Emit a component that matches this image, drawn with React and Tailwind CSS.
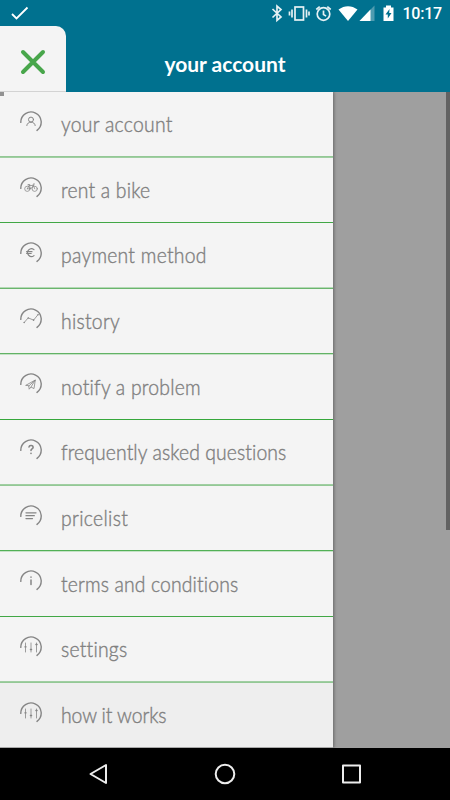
import clsx from 'clsx';

const STROKE = {
  fill: 'none',
  stroke: '#858585',
  strokeLinecap: 'round',
  strokeLinejoin: 'round',
};

const sliders = (
  <g {...STROKE} strokeWidth="0.8">
    <path d="M5.500 7v9M11 7v9M16.500 7v9" />
    <path d="M4.900 10.800h1.200M10.400 13.500h1.200M15.900 8.500h1.200" strokeWidth="1.300" />
  </g>
);

const MENU = [
  {
    label: 'your account',
    text: 'tracking-[0.3px]',
    row: 'h-[65px]',
    rule: 'border-[#93c895]',
    under: 'bg-[#a0cea2]',
    icon: (
      <g {...STROKE} strokeWidth="1">
        <circle cx="11" cy="8.600" r="2.500" />
        <path d="M6.800 14.500c.4-4.600 8-4.600 8.400 0" />
      </g>
    ),
  },
  {
    label: 'rent a bike',
    text: 'tracking-[0.22px]',
    row: 'h-[66px] pt-px',
    rule: 'border-[#41a745]',
    under: 'bg-[#f4f4f4]',
    icon: (
      <g {...STROKE} strokeWidth="0.75">
        <circle cx="7.300" cy="11.800" r="2.600" />
        <circle cx="14.700" cy="11.800" r="2.600" />
        <path d="M7.300 11.800 9 8.500h4.400l-2.600 3.300H7.300M8.800 7.600l2 4.200M14.700 11.800 13 7h1.600M8 7.600h1.800" />
      </g>
    ),
  },
  {
    label: 'payment method',
    text: 'tracking-[0.3px]',
    row: 'h-[65px]',
    rule: 'border-[#b5d9b6]',
    under: 'bg-[#6ab56d]',
    icon: (
      <g {...STROKE} strokeWidth="1.200">
        <path d="M14 7.600a3.900 3.900 0 1 0 0 6M6.600 9.700h5.400M6.600 11.500h4.600" />
      </g>
    ),
  },
  {
    label: 'history',
    text: 'tracking-[0.3px]',
    row: 'h-[66px] pt-px',
    rule: 'border-[#62b265]',
    under: 'bg-[#c5e2c6]',
    icon: (
      <g {...STROKE} strokeWidth="0.8">
        <path d="m4.200 14.500 4-4.600 5.400 2.200 4.400-5.400" />
        <path d="M4.200 14.500v.1M8.200 9.900v.1M13.600 12.100v.1M18 6.700v.1" strokeWidth="1.500" />
      </g>
    ),
  },
  {
    label: 'notify a problem',
    text: 'tracking-[0.25px] mt-px',
    row: 'h-[66px]',
    rule: 'border-[#36a73b]',
    under: 'bg-[#f4f4f4]',
    icon: (
      <g {...STROKE} strokeWidth="0.8">
        <path d="M6 12.200 15.300 7l-1.300 8.600-3-1.600-1.800 2.200-.4-3.200ZM8.800 13l6.500-6-4.300 7" />
      </g>
    ),
  },
  {
    label: 'frequently asked questions',
    text: 'tracking-[0.12px]',
    row: 'h-[65px]',
    rule: 'border-[#a0cea2]',
    under: 'bg-[#93c895]',
    icon: (
      <g {...STROKE} strokeWidth="1.600">
        <path d="M9 8c.3-2.200 4.200-2 4.100.4 0 1.500-2.100 1.400-2.100 3M11 14.300v.1" />
      </g>
    ),
  },
  {
    label: 'pricelist',
    text: 'tracking-[0.35px]',
    row: 'h-[66px] pt-px',
    rule: 'border-[#52b056]',
    under: 'bg-[#c5e2c6]',
    icon: (
      <g {...STROKE} strokeWidth="1.300">
        <path d="M6 7.800h10M6 10.700h8.300M6 13.600h6.500" />
      </g>
    ),
  },
  {
    label: 'terms and conditions',
    text: 'tracking-[0.16px] mt-px',
    row: 'h-[66px]',
    rule: 'border-[#41a745]',
    under: 'bg-[#f4f4f4]',
    icon: (
      <g {...STROKE} strokeWidth="1.500">
        <path d="M11 10v4.600M11 7.100v.1" />
      </g>
    ),
  },
  {
    label: 'settings',
    text: 'tracking-[0.25px]',
    row: 'h-[65px]',
    rule: 'border-[#a0cea2]',
    under: 'bg-[#93c895]',
    icon: sliders,
  },
  {
    label: 'how it works',
    text: 'tracking-[-0.1px]',
    row: 'h-[66px] pt-px',
    rule: 'border-[#a8a8a8]',
    icon: sliders,
    pressed: true,
  },
];

function MenuIcon({ children }) {
  return (
    <svg width="24" height="24" viewBox="-1 -1 24 24" className="shrink-0">
      <path
        d="M.8 11.400A10.200 10.200 0 1 1 17 19.400"
        {...STROKE}
        strokeWidth="1.400"
      />
      {children}
    </svg>
  );
}

function StatusBar() {
  return (
    <div className="flex h-[26px] items-center justify-between pl-[10px] pr-[8px] text-white">
      <svg width="20" height="16" viewBox="0 0 20 16">
        <path d="m2 9 4.500 4.500L17.500 2.500" fill="none" stroke="#fff" strokeWidth="1.800" />
      </svg>
      <div className="flex items-center">
        <svg width="130" height="20" viewBox="0 0 130 20">
          <g fill="none" stroke="#e6f1f4" strokeWidth="1.700">
            <path d="m2.500 6 8.500 8L7 17.500V3L11 6.500 2.500 14.500" />
            <rect x="25" y="4" width="8.500" height="13" />
            <path d="M22 6.500v8M36.500 6.500v8M19.500 8.500v4M39 8.500v4" />
            <circle cx="53.500" cy="11" r="6.300" />
            <path d="M53.500 7.500v4l2.600 1.600M46.300 6.500l3.400-2.900M57.300 3.600 60.700 6.500" />
          </g>
          <path d="M68.500 6.500c6-4.500 13-4.500 19 0L78 18Z" fill="#fff" />
          <path d="M104.500 2.500v15.500H89.500Z" fill="#4f9cb0" />
          <path d="M100.500 6.500v11.500H89.500Z" fill="#fff" />
          <path d="M113.500 4.500h2.500V2.500h5v2h2.500v13.500h-10Z" fill="#fff" />
          <path d="m119.500 6-4 5.500h2.300v4l3.700-5.500h-2.300Z" fill="#00718f" />
        </svg>
        <span className="ml-[2px] mt-px font-[Roboto,sans-serif] text-[16px] font-medium leading-5 tracking-[-0.2px]">
          10:17
        </span>
      </div>
    </div>
  );
}

function Header() {
  return (
    <header className="h-[92px] bg-[#00718f]">
      <StatusBar />
      <div className="grid h-[66px] grid-cols-[66px_1fr_66px]">
        <button
          aria-label="close menu"
          className="flex items-center justify-center rounded-tr-[10px] border-b border-[#d3d3d3] bg-[#f4f4f4]"
        >
          <svg width="28" height="28" viewBox="0 0 28 28" className="mt-[7px]">
            <path
              d="M4 4 24 24M24 4 4 24"
              stroke="#48a64b"
              strokeWidth="4"
              strokeLinecap="round"
            />
          </svg>
        </button>
        <h1 className="pt-[23px] text-center text-[21px] font-bold leading-[30px] text-white">
          your account
        </h1>
      </div>
    </header>
  );
}

function Menu() {
  return (
    <nav className="w-[333px] bg-[#f4f4f4] shadow-[1px_0_3px_rgba(0,0,0,0.35)]">
      {MENU.map((item, i) => (
        <div
          key={item.label}
          className={clsx(
            'relative flex items-start border-b pl-[19px]',
            item.row,
            item.rule,
            item.pressed && 'bg-[#eeeeee]'
          )}
        >
          {i > 0 && (
            <div className={clsx('absolute inset-x-0 top-0 h-px', MENU[i - 1].under)} />
          )}
          <div className="pt-[18px]">
            <MenuIcon>{item.icon}</MenuIcon>
          </div>
          <span
            className={clsx(
              'ml-[18px] origin-left scale-x-[0.9] whitespace-nowrap pt-[17px] text-[21.500px] font-light leading-[30px] text-[#808080] [-webkit-text-stroke:0.4px_#808080]',
              item.text
            )}
          >
            {item.label}
          </span>
        </div>
      ))}
    </nav>
  );
}

function NavBar() {
  return (
    <footer className="flex h-[52px] items-center justify-center bg-black">
      <svg width="450" height="52" viewBox="0 0 450 52">
        <g fill="none" stroke="#ededed" strokeWidth="2" strokeLinejoin="round">
          <path d="M106 17v18L90.500 26Z" />
          <circle cx="225" cy="26" r="9.300" />
          <rect x="343" y="17.500" width="17" height="17" />
        </g>
      </svg>
    </footer>
  );
}

export default function App() {
  return (
    <div className="flex h-[800px] w-[450px] flex-col overflow-hidden bg-[#9f9f9f] font-[Lato,sans-serif]">
      <Header />
      <main className="relative flex h-[656px] justify-between overflow-hidden">
        <Menu />
        <div className="h-[438px] w-[4px] bg-[#626262]" />
        <div className="absolute left-0 top-0 h-[4px] w-[4px] bg-[#929292]" />
      </main>
      <NavBar />
    </div>
  );
}
